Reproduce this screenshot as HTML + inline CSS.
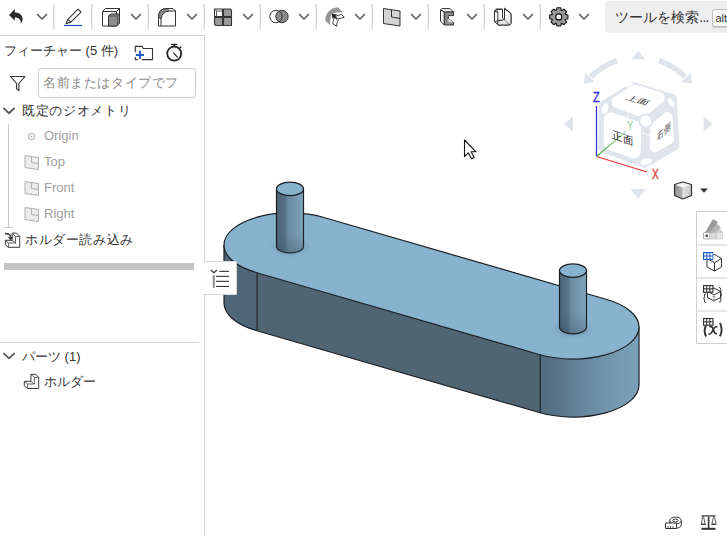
<!DOCTYPE html>
<html lang="ja"><head><meta charset="utf-8">
<style>
html,body{margin:0;padding:0;background:#fff;width:727px;height:536px;overflow:hidden;position:relative;font-family:"Liberation Sans",sans-serif;color:#333}
.a{position:absolute}
svg{position:absolute;left:0;top:0;overflow:visible}
.t{position:absolute;white-space:nowrap;font-size:13px;line-height:16px}
</style></head><body>

<!-- Viewport model -->
<svg width="727" height="536" viewBox="0 0 727 536">
<defs>
<linearGradient id="pin" x1="0" x2="1" y1="0" y2="0">
<stop offset="0" stop-color="#4b6477"/><stop offset="0.33" stop-color="#587487"/><stop offset="0.42" stop-color="#6a8ba2"/><stop offset="1" stop-color="#80a4bc"/>
</linearGradient>
<linearGradient id="rside" x1="0" x2="1" y1="0" y2="0">
<stop offset="0" stop-color="#526b7d"/><stop offset="0.18" stop-color="#577287"/><stop offset="0.3" stop-color="#5e7c92"/><stop offset="0.46" stop-color="#67879e"/><stop offset="0.63" stop-color="#6f92a9"/><stop offset="0.8" stop-color="#759ab2"/><stop offset="1" stop-color="#7aa0b8"/>
</linearGradient>
<linearGradient id="pinb" x1="0" x2="0" y1="0" y2="1"><stop offset="0" stop-color="#2f4656" stop-opacity="0"/><stop offset="1" stop-color="#2f4656" stop-opacity="0.3"/></linearGradient>
<radialGradient id="sh" cx="0.5" cy="0.5" r="0.5">
<stop offset="0" stop-color="#3f5b70" stop-opacity="0.35"/><stop offset="1" stop-color="#3f5b70" stop-opacity="0"/>
</radialGradient>
</defs>
<g stroke="#1b1f23" stroke-width="1.2" stroke-linejoin="round">
<!-- left curved side -->
<path d="M224,245 L224,303 A66,32 0 0 0 256.1,330.5 L256.1,272.5 A66,32 0 0 1 224,245 Z" fill="#4f6676" stroke="none"/>
<!-- flat side -->
<path d="M256.1,272.5 L540.2,354.8 L540.2,412.8 L256.1,330.5 Z" fill="#4f6574" stroke="none"/>
<!-- right curved side -->
<path d="M539.1,354.5 A66,32 0 0 0 639,327 L639,385 A66,32 0 0 1 539.1,412.5 Z" fill="url(#rside)" stroke="none"/>
<!-- outline of sides -->
<path d="M224,245 L224,303 A66,32 0 0 0 256.1,330.5 L539.1,412.5 A66,32 0 0 0 639,385 L639,327" fill="none"/>
<line x1="257" y1="272.8" x2="257" y2="330.8"/>
<line x1="540.2" y1="354.8" x2="540.2" y2="412.8"/>
<!-- top face -->
<path d="M323.9,217.5 L606.9,299.5 A66,32 0 0 1 639,327 A66,32 0 0 1 539.1,354.5 L256.1,272.5 A66,32 0 0 1 224,245 A66,32 0 0 1 323.9,217.5 Z" fill="#88b3ce"/>
<!-- pin shadows -->
<ellipse cx="290" cy="247" rx="22" ry="11" fill="url(#sh)" stroke="none"/>
<ellipse cx="573" cy="329" rx="22" ry="11" fill="url(#sh)" stroke="none"/>
<!-- left pin -->
<path d="M276.5,188.9 L276.5,246.2 A13.5,6.7 0 0 0 303.5,246.2 L303.5,188.9 Z" fill="url(#pin)"/>
<path d="M276.5,232 L276.5,246.2 A13.5,6.7 0 0 0 303.5,246.2 L303.5,232 Z" fill="url(#pinb)" stroke="none"/>
<ellipse cx="290" cy="188.9" rx="13.5" ry="6.7" fill="#88b3ce"/>
<!-- right pin -->
<path d="M559.5,270.6 L559.5,327.1 A13.5,6.7 0 0 0 586.5,327.1 L586.5,270.6 Z" fill="url(#pin)"/>
<path d="M559.5,313 L559.5,327.1 A13.5,6.7 0 0 0 586.5,327.1 L586.5,313 Z" fill="url(#pinb)" stroke="none"/>
<ellipse cx="573" cy="270.6" rx="13.5" ry="6.7" fill="#88b3ce"/>
</g>
</svg>


<!-- Toolbar -->
<svg width="727" height="36" viewBox="0 0 727 36">
<g fill="none" stroke="#5c5c5c" stroke-width="1.6" stroke-linecap="round" stroke-linejoin="round">
<path d="M37.5,14.5 L42,19 L46.5,14.5"/>
<path d="M131.5,14.5 L136,19 L140.5,14.5"/>
<path d="M187.5,14.5 L192,19 L196.5,14.5"/>
<path d="M243.5,14.5 L248,19 L252.5,14.5"/>
<path d="M299.5,14.5 L304,19 L308.5,14.5"/>
<path d="M355.5,14.5 L360,19 L364.5,14.5"/>
<path d="M411.5,14.5 L416,19 L420.5,14.5"/>
<path d="M467.5,14.5 L472,19 L476.5,14.5"/>
<path d="M523.5,14.5 L528,19 L532.5,14.5"/>
<path d="M579.5,14.5 L584,19 L588.5,14.5"/>
</g>
<g fill="#d9d9d9">
<rect x="53" y="4" width="1.5" height="26"/>
<rect x="91" y="4" width="1.5" height="26"/>
<rect x="147.5" y="4" width="1.5" height="26"/>
<rect x="203.5" y="4" width="1.5" height="26"/>
<rect x="259.5" y="4" width="1.5" height="26"/>
<rect x="315.5" y="4" width="1.5" height="26"/>
<rect x="371.5" y="4" width="1.5" height="26"/>
<rect x="427.5" y="4" width="1.5" height="26"/>
<rect x="483.5" y="4" width="1.5" height="26"/>
<rect x="539.5" y="4" width="1.5" height="26"/>
</g>
<!-- undo -->
<path d="M9,15 L14.8,9 L14.8,12.6 C19.5,12.6 22.6,15.2 22.6,19.3 C22.6,21 21.8,22.6 20.6,23.6 C21.2,19.8 19.2,17.4 14.8,17.4 L14.8,20.8 Z" fill="#2b2b2b"/>
<!-- pencil -->
<g fill="none" stroke="#333" stroke-width="1.1" stroke-linejoin="round">
<path d="M66,23.6 L67.8,19.4 L78,9.2 L81,12.2 L70.8,22.2 Z"/>
<path d="M67.8,19.4 L70.8,22.2"/>
</g>
<rect x="64" y="24.9" width="18" height="1.2" fill="#1d4fbf"/>
<!-- extrude -->
<g stroke="#333" stroke-width="1" stroke-linejoin="round">
<path d="M102.5,11.5 L105.5,8.5 L119.5,8.5 L119.5,23 L116.5,26 L102.5,26 Z" fill="#fff"/>
<path d="M102.5,11.5 L116.5,11.5 L116.5,26 M116.5,11.5 L119.5,8.5" fill="none"/>
<path d="M108.5,16 L110.5,14 L119.5,14 L119.5,23 L116.5,26 L108.5,26 Z" fill="#8f8f8f"/>
<path d="M108.5,16 L117.5,16 L117.5,26 M117.5,16 L119.5,14" fill="none" stroke-width="0.7"/>
</g>
<!-- fillet -->
<g stroke="#333" stroke-width="1" stroke-linejoin="round">
<path d="M158.5,26 L158.5,17 Q158.5,8.5 167,8.5 L173,8.5 L175.5,11 L175.5,26 Z" fill="#fff"/>
<path d="M158.5,17 Q158.5,8.5 167,8.5 L169.5,11 Q162,11.5 161,19 Z" fill="#8a8a8a"/>
<path d="M161,19 L161,26 M169.5,11 L175.5,11" fill="none"/>
</g>
<!-- shell 4 squares -->
<g stroke="#333" stroke-width="1.1" stroke-linejoin="round">
<path d="M214.5,9 L222.5,9 L222.5,16.5 L214.5,16.5 Z" fill="#fff"/>
<path d="M223.5,9 L230,9 L231.5,10.5 L231.5,16.5 L223.5,16.5 Z" fill="#9a9a9a"/>
<path d="M214.5,17.5 L222.5,17.5 L222.5,25.5 L216,25.5 L214.5,24 Z" fill="#9a9a9a"/>
<path d="M223.5,17.5 L231.5,17.5 L231.5,25.5 L223.5,25.5 Z" fill="#9a9a9a"/>
<path d="M214.5,9 L216.5,11 L222.5,11 M216.5,11 L216.5,16.5" fill="none" stroke-width="0.8"/>
</g>
<!-- boolean -->
<g stroke="#333" stroke-width="1">
<circle cx="282" cy="16.5" r="6.2" fill="#8a8a8a"/>
<circle cx="276" cy="16.5" r="6.2" fill="none"/>
</g>
<!-- transform -->
<path d="M325.2,20.5 Q326,8.5 338,7.2 L342.6,12.3 Q333.5,12 331.2,15 Q330,19 330,25 Z" fill="#959595"/>
<path d="M332.7,23.4 L336.6,26.3 Q337,21 338.6,18.8 L344.3,17.3 L341.4,14.4 L337,15.7 Q334.5,17 333.6,19.5 Z" fill="#fff" stroke="#333" stroke-width="0.9" stroke-linejoin="round"/>
<path d="M333.5,15.5 L337.3,19.3" stroke="#222" stroke-width="1.6"/>
<path d="M331.8,13.8 L337,14.5 L332.5,19 Z" fill="#222"/>
<!-- plane -->
<g stroke="#333" stroke-width="1" stroke-linejoin="round">
<path d="M383.5,8.5 L400,11 L400,26 L383.5,23.5 Z" fill="#d4d4d4"/>
<path d="M391.5,9.5 L391.5,17 L400,18.5" fill="none"/>
</g>
<!-- sheet metal -->
<g stroke="#333" stroke-width="1" stroke-linejoin="round">
<path d="M440.5,10 L441.8,8.6 L450.2,8.6 L453.5,12 L444.3,12 Z" fill="#f4f4f4"/>
<path d="M440.5,10 L444.3,12 L444.3,25 L440.5,21.2 Z" fill="#fafafa"/>
<path d="M444.3,12 L453.5,12 L453.5,15.6 L448.3,15.6 L448.3,18.8 L453.5,22.3 L453.5,25 L444.3,25 Z" fill="#8c8c8c"/>
<path d="M448.3,18.8 L453.5,22.3 L448.3,22.3 Z" fill="#e0e0e0" stroke="none"/>
</g>
<!-- another -->
<g stroke="#333" stroke-width="1" stroke-linejoin="round">
<path d="M494.5,11 L496.5,9.2 L502.5,9.2 L502.5,18.2 L504.5,19.6 L504.5,8.3 L511,13.6 L511,23.5 L509.5,25 L498.2,25 L494.5,21.5 Z" fill="#fff"/>
<path d="M497.8,17.8 L502.5,17.8 L509.5,25 L497.8,25 Z" fill="#e8e8e8" stroke="none"/>
<path d="M504.5,19.6 L511,13.6 L511,23.5 L509.5,25 Z" fill="#ececec" stroke="none"/>
<path d="M502.5,18.2 L504.5,19.6 L510.5,24.6 L508.5,25 Z" fill="#9a9a9a" stroke="none"/>
<path d="M494.5,11 L497.8,12.5 L497.8,25 M496.5,9.2 L497.8,12.5" fill="none"/>
<path d="M494.5,11 L496.5,9.2 L502.5,9.2 L502.5,18.2 M504.5,19.6 L504.5,8.3 L511,13.6 L511,23.5 L509.5,25 L498.2,25 L494.5,21.5 Z" fill="none"/>
</g>
<!-- gear -->
<path fill="#999" stroke="#111" stroke-width="1.1" stroke-linejoin="round" d="M556.27,10.37 L556.95,7.79 L560.65,7.79 L561.33,10.37 L561.62,10.50 L563.94,9.15 L566.55,11.76 L565.20,14.08 L565.33,14.37 L567.91,15.05 L567.91,18.75 L565.33,19.43 L565.20,19.72 L566.55,22.04 L563.94,24.65 L561.62,23.30 L561.33,23.43 L560.65,26.01 L556.95,26.01 L556.27,23.43 L555.98,23.30 L553.66,24.65 L551.05,22.04 L552.40,19.72 L552.27,19.43 L549.69,18.75 L549.69,15.05 L552.27,14.37 L552.40,14.08 L551.05,11.76 L553.66,9.15 L555.98,10.50 Z"/>
<circle cx="558.8" cy="16.9" r="3" fill="#fff" stroke="#111" stroke-width="1.2"/>
<!-- search box -->
<rect x="605" y="1" width="140" height="32" rx="4" fill="#eeeeee"/>
<rect x="712.5" y="10" width="30" height="17.5" rx="2" fill="#a9a9a9"/>
<rect x="712.5" y="9.5" width="30" height="17" rx="2" fill="#f7f7f7" stroke="#bdbdbd" stroke-width="1"/>
</svg>
<div class="t" style="left:615.3px;top:8px;font-size:14px;line-height:18px;color:#333">ツールを検索<span style="letter-spacing:-0.8px">...</span></div>
<div class="t" style="left:715.5px;top:11px;font-size:11px;line-height:14px;color:#333">alt</div>

<!-- Toolbar bottom line & left panel borders -->
<div class="a" style="left:0;top:35px;width:205px;height:1px;background:#d6d6d6"></div>
<div class="a" style="left:204px;top:35px;width:1px;height:501px;background:#d6d6d6"></div>


<!-- Left panel -->
<svg width="205" height="536" viewBox="0 0 205 536">
<!-- folder plus -->
<g fill="none" stroke="#333" stroke-width="1.1" stroke-linejoin="round">
<path d="M135.3,52.3 L135.3,46.4 L142,46.4 L143.3,48.5 L152.5,48.5 L152.5,59.6 L141.8,59.6"/>
<path d="M135.3,57 L135.3,59.6 L137.8,59.6"/>
</g>
<path d="M135.8,54.9 L143.9,54.9 M139.9,50.8 L139.9,59" stroke="#1e5fc4" stroke-width="2"/>
<!-- stopwatch -->
<g fill="none" stroke="#2a2a2a">
<circle cx="174.2" cy="53.6" r="7" stroke-width="1.8"/>
<path d="M171.2,44.5 L177.2,44.5" stroke-width="1.5"/>
<path d="M174.2,44.5 L174.2,46.6" stroke-width="1.5"/>
<path d="M179.6,48.3 L181.2,46.7" stroke-width="1.5"/>
<path d="M173.3,52.6 L177.6,57.4" stroke-width="1.3"/>
</g>
<!-- filter -->
<path d="M10.5,76.5 L25,76.5 L18.9,83.5 L18.9,90.6 L16.6,88.8 L16.6,83.5 Z" fill="none" stroke="#333" stroke-width="1.1" stroke-linejoin="round"/>
<!-- input -->
<rect x="38.5" y="68.5" width="157" height="29" rx="2.5" fill="#fff" stroke="#cfcfcf"/>
<!-- chevrons -->
<g fill="none" stroke="#5a5a5a" stroke-width="1.9" stroke-linecap="round" stroke-linejoin="round">
<path d="M3.9,108.4 L9,113.2 L14.1,108.4"/>
<path d="M3.9,353.6 L9,358.4 L14.1,353.6"/>
</g>
<!-- tree line -->
<rect x="8" y="124" width="1" height="103.5" fill="#c8c8c8"/>
<rect x="4" y="227" width="9" height="1" fill="#c8c8c8"/>
<!-- origin -->
<circle cx="31.5" cy="136.5" r="3.2" fill="none" stroke="#a8a8a8" stroke-width="1"/>
<circle cx="31.5" cy="136.5" r="1.1" fill="#a8a8a8"/>
<!-- plane icons -->
<g stroke="#b0b0b0" stroke-width="1" stroke-linejoin="round">
<path d="M25,155.5 L38.5,157.5 L38.5,169.5 L25,167.5 Z" fill="#ececec"/>
<path d="M31.5,156.5 L31.5,162.5 L38.5,163.5" fill="none"/>
<path d="M25,181.5 L38.5,183.5 L38.5,195.5 L25,193.5 Z" fill="#ececec"/>
<path d="M31.5,182.5 L31.5,188.5 L38.5,189.5" fill="none"/>
<path d="M25,207.5 L38.5,209.5 L38.5,221.5 L25,219.5 Z" fill="#ececec"/>
<path d="M31.5,208.5 L31.5,214.5 L38.5,215.5" fill="none"/>
</g>
<!-- import icon -->
<g stroke="#3a3a3a" stroke-width="1" fill="#fff" stroke-linejoin="round">
<path d="M12.1,233.1 L16.4,233.1 L19.7,236.4 L19.7,247.3 L8.2,247.3 L5.3,244.6 L5.3,240.3 L12.1,240.3 Z"/>
<path d="M5.3,240.3 L8.4,243 L15.5,243 L15.5,236.4 L19.7,236.4 M12.1,233.1 L15.5,236.4 M8.4,243 L8.4,247.3 M12.1,240.3 L15.5,243" fill="none" stroke-width="0.8"/>
</g>
<path d="M5,233.6 Q10.5,233.2 10.6,237.5" fill="none" stroke="#444" stroke-width="1.7"/>
<path d="M7.8,237.3 L13.6,237.3 L10.7,240.2 Z" fill="#333"/>
<!-- gray bar -->
<rect x="4" y="263" width="190" height="7" fill="#c4c4c4"/>
<!-- separator -->
<rect x="0" y="342" width="199" height="1" fill="#d6d6d6"/>
<!-- part icon -->
<g stroke="#3a3a3a" stroke-width="1" fill="#fff" stroke-linejoin="round">
<path d="M30.9,374.3 L35.8,374.3 L38.7,377.4 L38.7,388.5 L27.6,388.5 L24.3,385.8 L24.3,381.3 L30.9,381.3 Z"/>
<path d="M24.3,381.3 L27.6,384 L34.4,384 L34.4,377.4 L38.7,377.4 M30.9,374.3 L34.4,377.4 M27.6,384 L27.6,388.5 M30.9,381.3 L33.6,383.6" fill="none" stroke-width="0.8"/>
</g>
</svg>
<div class="t" style="left:4px;top:43px;color:#333">フィーチャー (5 件)</div>
<div class="t" style="left:43px;top:75px;letter-spacing:0.6px;color:#8a8a8a">名前またはタイプでフ</div>
<div class="t" style="left:22px;top:103px;letter-spacing:0.7px;color:#333">既定のジオメトリ</div>
<div class="t" style="left:44px;top:128px;color:#a0a0a0">Origin</div>
<div class="t" style="left:44px;top:154px;color:#a0a0a0">Top</div>
<div class="t" style="left:44px;top:180px;color:#a0a0a0">Front</div>
<div class="t" style="left:44px;top:206px;color:#a0a0a0">Right</div>
<div class="t" style="left:25px;top:232px;letter-spacing:0.6px;color:#333">ホルダー読み込み</div>
<div class="t" style="left:22px;top:349px;color:#333">パーツ (1)</div>
<div class="t" style="left:44px;top:374px;color:#333">ホルダー</div>


<!-- panel tab -->
<svg width="727" height="536" viewBox="0 0 727 536">
<rect x="204" y="261.5" width="32.5" height="33" fill="#fff" stroke="none"/>
<path d="M204,261.5 L236.5,261.5 L236.5,294.5 L204,294.5" fill="none" stroke="#d6d6d6" stroke-width="1"/>
<path d="M210.9,270.1 L213.9,272.8 L216.9,270.1" fill="none" stroke="#444" stroke-width="1.3"/>
<rect x="212.8" y="275.2" width="2" height="12.6" fill="#8a8a8a"/>
<g fill="#333"><rect x="219.3" y="270.8" width="9.7" height="1.1"/><rect x="216" y="275.8" width="13" height="1.1"/><rect x="216" y="280.8" width="13" height="1.1"/><rect x="216" y="285.9" width="13" height="1.1"/></g>
</svg>

<!-- View cube -->
<svg width="727" height="536" viewBox="0 0 727 536">
<g fill="#dfe5eb">
<!-- navigation triangles -->
<path d="M638.2,50.5 L645.5,59.3 L631,59.3 Z"/>
<path d="M564,124 L573,116 L573,132 Z"/>
<path d="M712.5,124 L703.5,116 L703.5,132 Z"/>
<path d="M638.2,198.5 L646,189 L630.5,189 Z"/>
</g>
<g fill="none" stroke="#dfe5eb" stroke-width="5.5">
<path d="M617,60.7 A66.5,66.5 0 0 0 591,77"/>
<path d="M659,60.7 A66.5,66.5 0 0 1 685,77"/>
</g>
<path d="M585.1,72.4 L584.1,83.5 L594.7,82 Z" fill="#dfe5eb"/>
<path d="M690.9,72.4 L691.9,83.5 L681.3,82 Z" fill="#dfe5eb"/>
<!-- cube body -->
<path d="M633.6,86.7 L672.3,98.4 L675.0,145.7 L644.4,163.2 L603.0,147.9 L603.4,105.6 Z" fill="#dfe5eb" stroke="#dfe5eb" stroke-width="9" stroke-linejoin="round"/>
<path d="M617.5,102.1 L635.6,90.7 L658.8,97.7 L642.6,111.0 Z" fill="#fff" stroke="#fff" stroke-width="12" stroke-linejoin="round"/>
<path d="M610.9,119.4 L634.2,127.7 L633.7,151.4 L610.7,142.9 Z" fill="#fff" stroke="#fff" stroke-width="14" stroke-linejoin="round"/>
<path d="M655.0,127.4 L667.6,117.1 L668.9,139.2 L654.6,147.3 Z" fill="#fff" stroke="#fff" stroke-width="10" stroke-linejoin="round"/>
<!-- corner circles -->
<circle cx="645.8" cy="121" r="6.5" fill="#fff" stroke="#dfe5eb" stroke-width="2.2"/>
<ellipse cx="605" cy="108.6" rx="3" ry="5.5" fill="#fff" transform="rotate(20 605 108.6)"/>
<ellipse cx="671" cy="102.5" rx="2.5" ry="5" fill="#fff" transform="rotate(-30 671 102.5)"/>
<ellipse cx="646.3" cy="161.5" rx="6" ry="3" fill="#fff" transform="rotate(-15 646.3 161.5)"/>
<ellipse cx="629.5" cy="85" rx="4" ry="1.3" fill="#fff" transform="rotate(-28 629.5 85)"/>
<path d="M628,110 L628,121 M642,133 L653,136.5" stroke="#fff" stroke-width="1"/>
<!-- axes -->
<line x1="596.5" y1="106" x2="596.5" y2="156.5" stroke="#3434e0" stroke-width="1.3"/>
<line x1="596.5" y1="156.5" x2="647" y2="172" stroke="#e03434" stroke-width="1.3"/>
<line x1="596.5" y1="156.5" x2="626" y2="131.5" stroke="url(#ygrad)" stroke-width="1.1"/>
<defs><linearGradient id="ygrad" gradientUnits="userSpaceOnUse" x1="596.5" y1="156.5" x2="626" y2="131.5"><stop offset="0" stop-color="#3ca03c"/><stop offset="1" stop-color="#b8e0b8"/></linearGradient></defs>
<!-- small cube -->
<defs><linearGradient id="scl" x1="0" x2="1" y1="0" y2="0"><stop offset="0" stop-color="#8f8f8f"/><stop offset="1" stop-color="#b8b8b8"/></linearGradient>
<linearGradient id="scr" x1="0" x2="1" y1="0" y2="0"><stop offset="0" stop-color="#e4e4e4"/><stop offset="1" stop-color="#c4c4c4"/></linearGradient></defs>
<path d="M674.5,184.5 L682.8,182 L691.5,184.5 L682.8,187.5 Z" fill="#f6f6f6"/>
<path d="M674.5,184.5 L682.8,187.5 L682.8,199 L674.5,195.5 Z" fill="url(#scl)"/>
<path d="M682.8,187.5 L691.5,184.5 L691.5,195.5 L682.8,199 Z" fill="url(#scr)"/>
<path d="M674.5,184.5 L682.8,182 L691.5,184.5 L691.5,195.5 L682.8,199 L674.5,195.5 Z" fill="none" stroke="#333" stroke-width="1.2" stroke-linejoin="round"/>
<path d="M700,188.5 L708,188.5 L704,192.7 Z" fill="#333"/>
</svg>
<div class="t" style="left:592.6px;top:89px;font-size:14px;color:#3030e0;line-height:16px;transform:scaleX(0.78);transform-origin:0 0;-webkit-text-stroke:0.35px #3030e0">Z</div>
<div class="t" style="left:652.2px;top:166px;font-size:14px;color:#e03a3a;line-height:16px;transform:scaleX(0.72);transform-origin:0 0;-webkit-text-stroke:0.35px #e03a3a">X</div>
<div class="t" style="left:626.8px;top:119px;font-size:12px;color:#90cc90;line-height:14px;transform:scaleX(0.8);transform-origin:0 0">Y</div>
<div class="t" style="left:617.6px;top:91.9px;width:40px;height:16px;text-align:center;font-size:11px;line-height:16px;color:#222;transform:matrix(1,0.3,-0.5,0.5,0,0)">上面</div>
<div class="t" style="left:603.4px;top:130px;width:40px;height:16px;text-align:center;font-size:10.5px;line-height:16px;color:#222;transform:skewY(18deg)">正面</div>
<div class="t" style="left:643.8px;top:124px;width:40px;height:16px;text-align:center;font-size:10px;line-height:16px;color:#333;transform:matrix(0.66,-0.62,0,1.05,0,0)">右側</div>

<!-- Right toolbar -->
<svg width="727" height="536" viewBox="0 0 727 536">
<path d="M727,211.5 L696.5,211.5 L696.5,343.5 L727,343.5" fill="#fff" stroke="#cfcfcf" stroke-width="1"/>
<g fill="#cfcfcf"><rect x="697" y="244.5" width="30" height="1"/><rect x="697" y="277.5" width="30" height="1"/><rect x="697" y="310.5" width="30" height="1"/></g>
<!-- appearance -->
<path d="M705.5,232.5 L713,219.5 L717.5,222 L711,232.5 Z" fill="#9c9c9c" stroke="#8a8a8a" stroke-width="0.6" stroke-linejoin="round"/>
<path d="M709,232.5 L716.5,224 L720.5,227.5 L716,232.5 Z" fill="#b4b4b4" stroke="#9a9a9a" stroke-width="0.6" stroke-linejoin="round"/>
<path d="M714,232.5 L720.5,229 L722.5,232.5 Z" fill="#cfcfcf"/>
<rect x="703.5" y="232.5" width="6.5" height="6.5" rx="1" fill="#fff" stroke="#9a9a9a" stroke-width="0.8"/>
<rect x="710" y="232.5" width="6.3" height="6.5" fill="#d6d6d6" stroke="#b0b0b0" stroke-width="0.5"/>
<rect x="716.3" y="232.5" width="6.3" height="6.5" fill="#e6e6e6" stroke="#b8b8b8" stroke-width="0.5"/>
<circle cx="706.7" cy="235.8" r="1.3" fill="#333"/>
<!-- grid cube -->
<g fill="none" stroke="#333" stroke-width="1" stroke-linejoin="round">
<path d="M707,258.5 L714.5,254.5 L721.5,258.5 L721.5,267 L714.5,271 L707,267 Z"/>
<path d="M707,258.5 L714.5,262.8 L721.5,258.5 M714.5,262.8 L714.5,271"/>
</g>
<rect x="703" y="252" width="10.3" height="8" fill="#1e5fc4"/>
<g fill="#fff"><rect x="704.2" y="253.2" width="2.1" height="2.3"/><rect x="707.3" y="253.2" width="2.1" height="2.3"/><rect x="710.4" y="253.2" width="2.1" height="2.3"/>
<rect x="704.2" y="256.5" width="2.1" height="2.3"/><rect x="707.3" y="256.5" width="2.1" height="2.3"/><rect x="710.4" y="256.5" width="2.1" height="2.3"/></g>
<!-- grid braces cube -->
<g fill="#fff" stroke="#333" stroke-width="1" stroke-linejoin="round">
<path d="M707.5,291.5 L714,288 L720.5,291.5 L720.5,297.5 L714,301 L707.5,297.5 Z"/>
<path d="M707.5,291.5 L714,295 L720.5,291.5" fill="none"/>
</g>
<path d="M712.5,296.5 L715.5,296.5 M714,296.5 L714,300 M712.5,300 L715.5,300" stroke="#999" stroke-width="0.9"/>
<rect x="703" y="285" width="10.5" height="7.8" fill="#333"/>
<g fill="#fff"><rect x="704.1" y="286.1" width="2.1" height="2.2"/><rect x="707.2" y="286.1" width="2.1" height="2.2"/><rect x="710.3" y="286.1" width="2.1" height="2.2"/><rect x="704.1" y="289.4" width="2.1" height="2.2"/><rect x="707.2" y="289.4" width="2.1" height="2.2"/><rect x="710.3" y="289.4" width="2.1" height="2.2"/></g>
<path d="M706,294 Q704.2,294 704.4,296 L704.4,297.5 Q704.4,298.5 703.4,298.5 Q704.4,298.5 704.4,299.5 L704.4,301 Q704.2,302.5 706,302.5" fill="none" stroke="#333" stroke-width="1"/>
<path d="M719,287.5 Q721,287.5 720.8,289.5 L720.8,293.5 Q720.8,294.8 722,294.8 Q720.8,294.8 720.8,296 L720.8,300.5 Q721,302 719,302" fill="none" stroke="#333" stroke-width="1"/>
<!-- grid (x) -->
<rect x="703" y="318" width="10.5" height="7.8" fill="#333"/>
<g fill="#fff"><rect x="704.1" y="319.1" width="2.1" height="2.2"/><rect x="707.2" y="319.1" width="2.1" height="2.2"/><rect x="710.3" y="319.1" width="2.1" height="2.2"/><rect x="704.1" y="322.4" width="2.1" height="2.2"/><rect x="707.2" y="322.4" width="2.1" height="2.2"/><rect x="710.3" y="322.4" width="2.1" height="2.2"/></g>
<path d="M706,325.5 Q703.3,330.5 706,336.5" fill="none" stroke="#333" stroke-width="1.9"/>
<path d="M720,322.8 Q723.2,329.5 720,336.3" fill="none" stroke="#333" stroke-width="1.9"/>
<path d="M709.5,327 Q712.5,325.5 713.5,330 Q714.5,334.5 717,333.5" fill="none" stroke="#333" stroke-width="1.7"/>
<path d="M717.5,326.5 Q714.5,326.5 712.8,330.5 Q711,334.5 708.5,334" fill="none" stroke="#333" stroke-width="1.7"/>
</svg>

<!-- bottom right icons -->
<svg width="727" height="536" viewBox="0 0 727 536">
<g stroke="#333" stroke-width="1" fill="#fff" stroke-linejoin="round">
<path d="M669.9,520.5 L669.9,525 A5.7,3.2 0 0 0 681.3,525 L681.3,520.5"/>
<ellipse cx="675.6" cy="520.5" rx="5.7" ry="3.4"/>
<ellipse cx="675.6" cy="520.5" rx="2.6" ry="1.4"/>
<path d="M665.5,523 L676.5,523 L676.5,528.5 L665.5,528.5 Z"/>
</g>
<path d="M668,526 L668,528.5 M670.5,526 L670.5,528.5 M673,526 L673,528.5" stroke="#333" stroke-width="0.8"/>
<g fill="#333">
<rect x="701.5" y="527.8" width="14" height="2"/>
<rect x="707.8" y="516.5" width="1.6" height="11.5"/>
<rect x="701.5" y="515.3" width="14" height="1.2"/>
<rect x="701" y="523.5" width="4.8" height="1.4"/>
<rect x="711.5" y="523.5" width="4.8" height="1.4"/>
</g>
<path d="M702.5,516.5 L701.5,523.5 M703.5,516.5 L705,523.5 M714.5,516.5 L716,523.5 M713.5,516.5 L712,523.5" stroke="#333" stroke-width="0.8" fill="none"/>
</svg>

<!-- cursor -->
<svg width="727" height="536" viewBox="0 0 727 536">
<path d="M464.5,140 L464.5,156.5 L468.3,152.8 L471.5,158.8 L474.2,157.4 L471.2,151.8 L476,151.8 Z" fill="#fff" stroke="#111" stroke-width="1.1" stroke-linejoin="round"/>
</svg>

</body></html>
